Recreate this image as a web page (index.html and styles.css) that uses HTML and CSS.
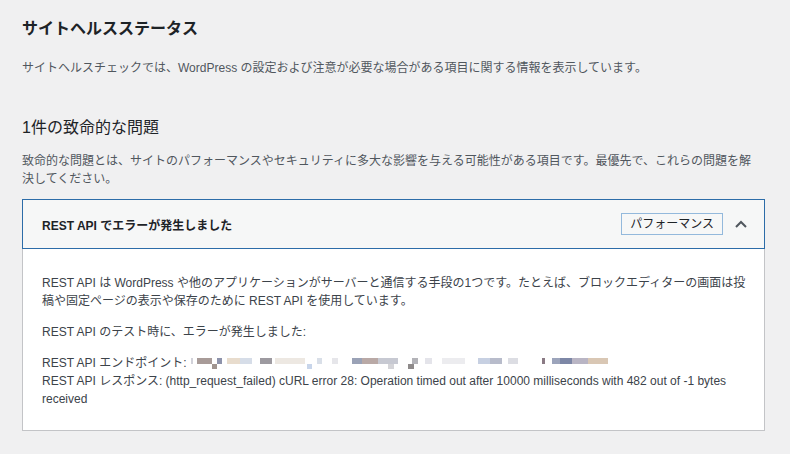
FILE: index.html
```html
<!DOCTYPE html>
<html lang="ja">
<head>
<meta charset="utf-8">
<title>サイトヘルスステータス</title>
<link rel="stylesheet" href="styles.css">
</head>
<body>
<main class="page">
  <h1 class="title">サイトヘルスステータス</h1>
  <p class="intro">サイトヘルスチェックでは、WordPress の設定および注意が必要な場合がある項目に関する情報を表示しています。</p>

  <h2 class="subtitle">1件の致命的な問題</h2>
  <p class="intro">致命的な問題とは、サイトのパフォーマンスやセキュリティに多大な影響を与える可能性がある項目です。最優先で、これらの問題を解決してください。</p>

  <section class="panel">
    <div class="panel-head">
      <span class="panel-title">REST API でエラーが発生しました</span>
      <span class="badge">パフォーマンス</span>
      <svg class="chev" width="14" height="10" viewBox="0 0 14 10" aria-hidden="true">
        <polyline points="2,8 7,3 12,8" fill="none" stroke="#50575e" stroke-width="2"/>
      </svg>
    </div>
    <div class="panel-body">
      <p>REST API は WordPress や他のアプリケーションがサーバーと通信する手段の1つです。たとえば、ブロックエディターの画面は投稿や固定ページの表示や保存のために REST API を使用しています。</p>
      <p>REST API のテスト時に、エラーが発生しました:</p>
      <p>REST API エンドポイント:<span class="blur" aria-label="hidden URL"></span><br>REST API レスポンス: (http_request_failed) cURL error 28: Operation timed out after 10000 milliseconds with 482 out of -1 bytes received</p>
    </div>
  </section>
</main>
</body>
</html>
```

FILE: styles.css
```css
html, body {
  margin: 0;
  padding: 0;
}
body {
  background: #f0f0f1;
  font-family: "Liberation Sans", "Noto Sans CJK JP", sans-serif;
  color: #3c434a;
  width: 790px;
  height: 454px;
  overflow: hidden;
}
.page {
  padding: 0 25px 0 22px;
}
.title {
  margin: 0;
  padding-top: 18px;
  font-size: 16px;
  line-height: 21px;
  font-weight: 700;
  color: #1d2327;
}
.intro {
  margin: 0;
  padding-right: 8px;
  font-size: 12px;
  line-height: 18px;
  color: #50575e;
}
.title + .intro {
  margin-top: 20px;
}
.subtitle {
  margin: 40px 0 0;
  font-size: 16px;
  line-height: 21px;
  font-weight: 400;
  color: #1d2327;
}
.subtitle + .intro {
  margin-top: 14px;
}
.panel {
  margin-top: 11px;
  background: #fff;
  border: 1px solid #c3c4c7;
  border-top: none;
}
.panel-head {
  display: flex;
  align-items: center;
  height: 48px;
  margin: 0 -1px;
  padding: 0 16px 0 19px;
  background: #f6f7f7;
  border: 1px solid #2c6ca8;
}
.panel-title {
  flex: 1;
  font-size: 12px;
  font-weight: 600;
  color: #1d2327;
}
.badge {
  font-size: 12px;
  line-height: 18px;
  padding: 1px 8px;
  border: 1px solid #93b9dc;
  background: #f6f7f7;
  color: #1d2327;
}
.chev {
  margin-left: 11px;
  display: block;
}
.panel-body {
  padding: 12px 18px 9px 19px;
  font-size: 12px;
  line-height: 18px;
}
.panel-body p {
  margin: 13px 0;
}
.blur {
  display: inline-block;
  vertical-align: -2px;
  margin-left: 2px;
  width: 422px;
  height: 11px;
  background:
    linear-gradient(to right,
      transparent 0 3px, #d2d2da 3px 5px, transparent 5px 9px,
      #a89b98 9px 24px, transparent 24px 29px, #8e93ab 29px 34px,
      transparent 34px 39px, #e8dccd 39px 52px, #d6dde8 52px 64px,
      transparent 64px 72px, #9d9aa0 72px 84px, transparent 84px 87px,
      #ede8e2 87px 117px, transparent 117px 129px, #d9dfe8 129px 134px,
      transparent 134px 144px, #e6e6ea 144px 150px, transparent 150px 164px,
      #9aa2b6 164px 174px, #b9a9a6 174px 190px, #c7c9d2 190px 210px,
      transparent 210px 224px, #b3b3b8 224px 230px, transparent 230px 237px,
      #e4e4ea 237px 244px, transparent 244px 254px, #ececef 254px 277px,
      transparent 277px 290px, #c7d0e2 290px 302px, #b8bccb 302px 314px,
      transparent 314px 320px, #dcdde3 320px 330px, transparent 330px 354px,
      #8a7a84 354px 357px, transparent 357px 364px, #9ca4bb 364px 372px,
      #7d87a6 372px 384px, #b9b5c4 384px 400px, #d9c7b4 400px 420px,
      transparent 420px) top / 100% 6px no-repeat,
    linear-gradient(to right,
      transparent 0 24px, #a0948f 24px 29px, transparent 29px 119px,
      #c8d5ea 119px 124px, transparent 124px 200px, #d4d4d8 200px 206px,
      transparent 206px 220px, #8e8a8a 220px 226px, transparent 226px) bottom / 100% 5px no-repeat;
}
```
